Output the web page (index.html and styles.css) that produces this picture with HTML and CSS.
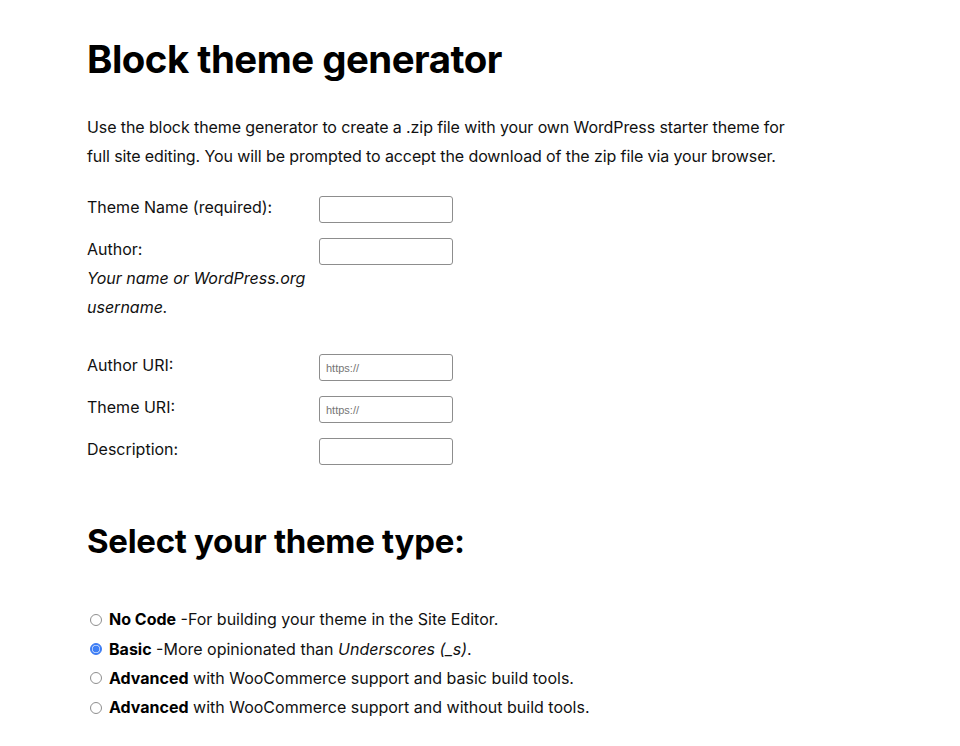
FILE: index.html
```html
<!DOCTYPE html>
<html lang="en">
<head>
<meta charset="utf-8">
<title>Block theme generator</title>
<link rel="stylesheet" href="styles.css">
</head>
<body>
<main class="page">
  <h1 class="title">Block theme generator</h1>
  <p class="intro">Use the block theme generator to create a .zip file with your own WordPress starter theme for full site editing. You will be prompted to accept the download of the zip file via your browser.</p>
  <form class="form">
    <div class="row">
      <label class="label" for="theme-name">Theme Name (required):</label>
      <input class="field" id="theme-name" type="text">
    </div>
    <div class="row row-tall">
      <div class="label">
        <label for="author">Author:</label>
        <p class="hint">Your name or WordPress.org username.</p>
      </div>
      <input class="field" id="author" type="text">
    </div>
    <div class="row">
      <label class="label" for="author-uri">Author URI:</label>
      <input class="field" id="author-uri" type="text" placeholder="https://">
    </div>
    <div class="row">
      <label class="label" for="theme-uri">Theme URI:</label>
      <input class="field" id="theme-uri" type="text" placeholder="https://">
    </div>
    <div class="row">
      <label class="label" for="description">Description:</label>
      <input class="field" id="description" type="text">
    </div>

    <h2 class="subtitle">Select your theme type:</h2>

    <ul class="types">
      <li class="type"><input class="radio" type="radio" name="type" id="t1"><label for="t1"><strong>No Code</strong> -For building your theme in the Site Editor.</label></li>
      <li class="type"><input class="radio" type="radio" name="type" id="t2" checked><label for="t2"><strong>Basic</strong> -More opinionated than <em>Underscores (_s)</em>.</label></li>
      <li class="type"><input class="radio" type="radio" name="type" id="t3"><label for="t3"><strong>Advanced</strong> with WooCommerce support and basic build tools.</label></li>
      <li class="type"><input class="radio" type="radio" name="type" id="t4"><label for="t4"><strong>Advanced</strong> with WooCommerce support and without build tools.</label></li>
    </ul>
  </form>
</main>
</body>
</html>
```
FILE: styles.css
```css
html, body {
  margin: 0;
  padding: 0;
  background: #ffffff;
}
body {
  font-family: Inter, "Liberation Sans", sans-serif;
  color: #111111;
  font-size: 16px;
  line-height: 29px;
}
.page {
  padding: 34px 0 0 87px;
}
.title {
  margin: 0;
  font-size: 38.4px;
  line-height: 50px;
  font-weight: 700;
  letter-spacing: -0.5px;
  color: #000;
}
.intro {
  margin: 29px 0 0;
  max-width: 720px;
  letter-spacing: -0.1px;
}
.form {
  margin-top: 22px;
}
.row {
  display: grid;
  grid-template-columns: 232px 134px;
  align-items: start;
  margin-bottom: 12px;
}
.row-tall {
  margin-bottom: 29px;
}
.label {
  width: 222px;
}
.hint {
  margin: 0;
  font-style: italic;
}
.field {
  box-sizing: border-box;
  width: 134px;
  height: 27px;
  margin: 3px 0 0;
  padding: 0 6px;
  border: 1px solid #8d8d8d;
  border-radius: 3px;
  font-family: "Liberation Sans", Arial, sans-serif;
  font-size: 11px;
  background: #fff;
}
.field::placeholder {
  color: #757575;
}
.subtitle {
  margin: 56px 0 0;
  font-size: 33px;
  line-height: 40px;
  font-weight: 700;
  letter-spacing: -0.3px;
  color: #000;
}
.types {
  list-style: none;
  margin: 44px 0 0;
  padding: 0;
}
.type {
  display: flex;
  align-items: center;
  height: 29.4px;
}
.radio {
  appearance: none;
  -webkit-appearance: none;
  box-sizing: border-box;
  width: 12px;
  height: 12px;
  margin: 0 7px 0 3px;
  border: 1px solid #8f8f8f;
  border-radius: 50%;
  background: #fff;
  flex: none;
}
.radio:checked {
  border-color: #3a78f2;
  background: radial-gradient(circle, #3d7ff6 0 3px, #b4cdfb 3.6px 4px, #3d7ff6 4.5px);
}
.type strong {
  font-weight: 700;
  color: #000;
}
```
